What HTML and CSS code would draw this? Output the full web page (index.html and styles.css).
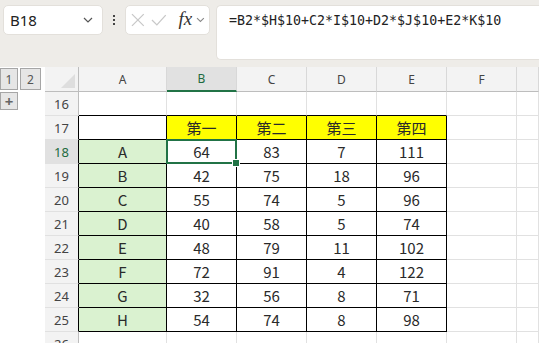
FILE: index.html
```html
<!DOCTYPE html>
<html lang="ja">
<head>
    <meta charset="UTF-8">
    <title>Sheet</title>
    <link rel="stylesheet" href="styles.css">
</head>
<body>
    <div class="toolbar">
        <div class="namebox">
            <span>B18</span>
            <svg width="10" height="6" viewBox="0 0 10 6"><path d="M1 1 L5 5 L9 1" fill="none" stroke="#555" stroke-width="1.2"/></svg>
        </div>
        <div class="dots"><i></i><i></i><i></i></div>
        <div class="fnbox">
            <svg width="16" height="16" viewBox="0 0 16 16"><path d="M2 2 L14 14 M14 2 L2 14" stroke="#c8c8c8" stroke-width="1.3"/></svg>
            <svg width="18" height="16" viewBox="0 0 18 16"><path d="M2 8 L7 13 L16 3" fill="none" stroke="#c8c8c8" stroke-width="1.3"/></svg>
            <span class="fx">fx</span>
            <svg width="9" height="6" viewBox="0 0 9 6"><path d="M1 1 L4.5 4.5 L8 1" fill="none" stroke="#888" stroke-width="1.1"/></svg>
        </div>
        <div class="formula">=B2*$H$10+C2*I$10+D2*$J$10+E2*K$10</div>
    </div>

    <div class="sheet">
        <div class="outline">
            <div class="levels">
                <span class="lvl">1</span>
                <span class="lvl">2</span>
            </div>
            <span class="lvl plus">+</span>
        </div>

        <div class="grid">
            <div class="corner"><i></i></div>
            <div class="colh">A</div>
            <div class="colh sel">B</div>
            <div class="colh">C</div>
            <div class="colh">D</div>
            <div class="colh">E</div>
            <div class="colh">F</div>
            <div class="colh"></div>

            <div class="rowh">16</div>
            <div class="c bb"></div><div class="c bb"></div><div class="c bb"></div><div class="c bb"></div><div class="c bb"></div><div class="c"></div><div class="c"></div>

            <div class="rowh br">17</div>
            <div class="c t"></div><div class="c t yel">第一</div><div class="c t yel">第二</div><div class="c t yel">第三</div><div class="c t yel">第四</div><div class="c"></div><div class="c"></div>

            <div class="rowh br on">18</div>
            <div class="c t grn">A</div><div class="c t active">64</div><div class="c t">83</div><div class="c t">7</div><div class="c t">111</div><div class="c"></div><div class="c"></div>

            <div class="rowh br">19</div>
            <div class="c t grn">B</div><div class="c t">42</div><div class="c t">75</div><div class="c t">18</div><div class="c t">96</div><div class="c"></div><div class="c"></div>

            <div class="rowh br">20</div>
            <div class="c t grn">C</div><div class="c t">55</div><div class="c t">74</div><div class="c t">5</div><div class="c t">96</div><div class="c"></div><div class="c"></div>

            <div class="rowh br">21</div>
            <div class="c t grn">D</div><div class="c t">40</div><div class="c t">58</div><div class="c t">5</div><div class="c t">74</div><div class="c"></div><div class="c"></div>

            <div class="rowh br">22</div>
            <div class="c t grn">E</div><div class="c t">48</div><div class="c t">79</div><div class="c t">11</div><div class="c t">102</div><div class="c"></div><div class="c"></div>

            <div class="rowh br">23</div>
            <div class="c t grn">F</div><div class="c t">72</div><div class="c t">91</div><div class="c t">4</div><div class="c t">122</div><div class="c"></div><div class="c"></div>

            <div class="rowh br">24</div>
            <div class="c t grn">G</div><div class="c t">32</div><div class="c t">56</div><div class="c t">8</div><div class="c t">71</div><div class="c"></div><div class="c"></div>

            <div class="rowh br">25</div>
            <div class="c t grn">H</div><div class="c t">54</div><div class="c t">74</div><div class="c t">8</div><div class="c t">98</div><div class="c"></div><div class="c"></div>

            <div class="rowh">26</div>
            <div class="c"></div><div class="c"></div><div class="c"></div><div class="c"></div><div class="c"></div><div class="c"></div><div class="c"></div>
        </div>
    </div>
</body>
</html>
```

FILE: styles.css
```css
/* Basic Styles */
body {
    margin: 0;
    width: 539px;
    height: 343px;
    overflow: hidden;
    background-color: #fff;
    font-family: "Noto Sans", "Liberation Sans", sans-serif;
}
.toolbar {
    height: 67px;
    box-sizing: border-box;
    padding: 5px 0 0 3px;
    background-color: #eeece8;
    display: flex;
    align-items: flex-start;
}
.namebox {
    width: 100px;
    height: 30px;
    box-sizing: border-box;
    padding: 0 9px 0 6px;
    background-color: #fff;
    border: 1px solid #e3e0db;
    border-radius: 5px;
    display: flex;
    align-items: center;
    justify-content: space-between;
    font-size: 15px;
    color: #222;
}
.dots {
    width: 22px;
    height: 30px;
    display: flex;
    flex-direction: column;
    align-items: center;
    justify-content: center;
    gap: 2px;
}
.dots i {
    width: 2px;
    height: 2px;
    background-color: #444;
}
.fnbox {
    width: 85px;
    height: 30px;
    box-sizing: border-box;
    padding: 0 4px 0 4px;
    background-color: #fff;
    border: 1px solid #e3e0db;
    border-radius: 5px;
    display: flex;
    align-items: center;
    gap: 4px;
}
.fnbox .fx {
    font-family: "Liberation Serif", serif;
    font-style: italic;
    font-size: 19px;
    color: #333;
    margin-left: 7px;
    margin-top: -3px;
}
.formula {
    flex: 1;
    height: 55px;
    margin-left: 6px;
    box-sizing: border-box;
    padding: 7px 12px;
    background-color: #fff;
    border: 1px solid #e3e0db;
    border-right: none;
    border-radius: 5px 0 0 5px;
    font-family: "DejaVu Sans Mono", monospace;
    font-size: 13.3px;
    line-height: 16px;
    color: #222;
}
.sheet {
    display: flex;
}
.outline {
    width: 45px;
    padding-top: 1px;
    display: flex;
    flex-direction: column;
    align-items: flex-start;
    gap: 2px;
}
.levels {
    display: flex;
    gap: 2px;
}
.lvl {
    width: 18px;
    height: 22px;
    box-sizing: border-box;
    background-color: #e6e6e6;
    border: 1px solid #a6a6a6;
    font-size: 12px;
    color: #555;
    display: flex;
    align-items: center;
    justify-content: center;
}
.lvl + .lvl {
    width: 21px;
}
.lvl.plus {
    width: 18px;
    height: 18px;
    font-size: 15px;
    font-weight: bold;
    color: #666;
}
.grid {
    flex: 1;
    display: grid;
    grid-template-columns: 34px 88px 70px 70px 70px 70px 70px 1fr;
    grid-template-rows: 25px;
    grid-auto-rows: 24px;
    font-family: "Noto Sans CJK JP", "Noto Sans", sans-serif;
}
.grid > div {
    box-sizing: border-box;
    border-right: 1px solid #e1e1e1;
    border-bottom: 1px solid #e1e1e1;
    display: flex;
    align-items: center;
    justify-content: center;
}
.grid .corner {
    background-color: #f3f3f3;
    border-right-color: #bdbdbd;
    border-bottom-color: #bdbdbd;
    position: relative;
}
.corner i {
    position: absolute;
    right: 3px;
    bottom: 3px;
    width: 0;
    height: 0;
    border-left: 14px solid transparent;
    border-bottom: 14px solid #dedede;
}
.grid .colh {
    background-color: #f3f3f3;
    border-right-color: #d8d8d8;
    border-bottom-color: #bdbdbd;
    font-family: "Noto Sans", sans-serif;
    font-size: 12px;
    color: #444;
}
.grid .colh.sel {
    background-color: #e1e1e1;
    border-bottom: 2px solid #217346;
    color: #1e6b40;
}
.grid .rowh {
    background-color: #f3f3f3;
    border-right-color: #bdbdbd;
    border-bottom-color: #e1e1e1;
    font-family: "Noto Sans", sans-serif;
    font-size: 13px;
    color: #444;
}
.grid .rowh.on {
    background-color: #e1e1e1;
    color: #1e6b40;
}
.grid .rowh.br {
    border-right-color: #000;
}
.grid .bb {
    border-bottom-color: #000;
}
.grid .t {
    border-right-color: #000;
    border-bottom-color: #000;
    font-size: 15px;
    color: #2a2a2a;
}
.grid .yel {
    background-color: #ffff00;
}
.grid .grn {
    background-color: #daf2d0;
}
.grid .active {
    position: relative;
}
.active::after {
    content: "";
    position: absolute;
    left: -1px;
    top: -1px;
    right: -1px;
    bottom: -1px;
    border: 2px solid #217346;
}
.active::before {
    content: "";
    position: absolute;
    right: -4px;
    bottom: -4px;
    width: 6px;
    height: 6px;
    background-color: #217346;
    border: 1px solid #fff;
    z-index: 1;
}
```
